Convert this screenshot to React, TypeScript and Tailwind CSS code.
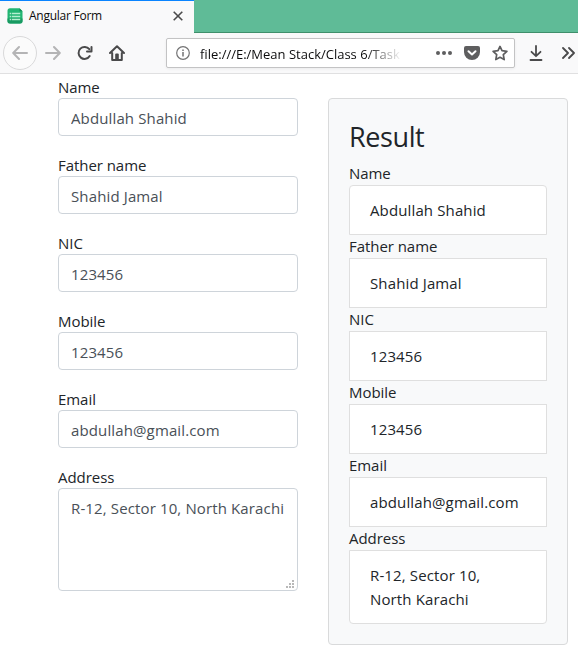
const uiFont = 'font-["Open_Sans","Noto_Sans",sans-serif]';

const fields = [
  { label: 'Name', value: 'Abdullah Shahid' },
  { label: 'Father name', value: 'Shahid Jamal' },
  { label: 'NIC', value: '123456' },
  { label: 'Mobile', value: '123456' },
  { label: 'Email', value: 'abdullah@gmail.com' },
];
const address = 'R-12, Sector 10, North Karachi';

function TabBar() {
  return (
    <div className="flex h-[33px] border-b border-[#3f8f6b] bg-[#5fbb97]">
      <div className="flex h-[33px] w-[194px] shrink-0 items-center border-t border-[#0a84ff] bg-[#f9f9fa] pb-1 pl-[7px] pr-[11px]">
        <svg width="16" height="16" viewBox="0 0 16 16" className="mt-px shrink-0">
          <path d="M3 0.3h9.5L15.5 3.3V13a2.5 2.5 0 0 1-2.5 2.5H3A2.5 2.5 0 0 1 .5 13V2.8A2.5 2.5 0 0 1 3 .3z" fill="#22b573" />
          <path d="M.5 10.5h15V13a2.5 2.5 0 0 1-2.5 2.5H3A2.5 2.5 0 0 1 .5 13z" fill="#189a62" />
          <path d="M12.5 .3l3 3h-3z" fill="#128a55" />
          <path d="M2.7 5.5h1.6M5 5.5h8.2M2.7 8.5h1.6M5 8.5h8.2M2.7 11.5h1.6M5 11.5h8.2" stroke="#b4efd0" strokeWidth="1.5" />
        </svg>
        <span className="ml-[6px] mt-0.5 whitespace-nowrap text-[12px] tracking-[-0.25px] text-[#0c0c0d]">Angular Form</span>
        <svg width="10" height="10" viewBox="0 0 10 10" className="ml-auto mt-0.5 shrink-0">
          <path d="M.7.7l8.6 8.6M9.3.7L.7 9.3" stroke="#4a4a4b" strokeWidth="1.6" />
        </svg>
      </div>
    </div>
  );
}

function NavBar() {
  return (
    <div className="flex h-[41px] items-center border-b border-[#e0e0e1] bg-[#f9f9fa] pl-[3px]">
      <div className="flex size-[34px] shrink-0 items-center justify-center rounded-full border border-[#d9d9da] bg-[#fbfbfb]">
        <svg width="16" height="16" viewBox="0 0 16 16" fill="none" stroke="#b4b4b5" strokeWidth="2" strokeLinecap="round" strokeLinejoin="round">
          <path d="M15 8H1.5M7 2L1.2 8L7 14" />
        </svg>
      </div>
      <svg width="16" height="16" viewBox="0 0 16 16" fill="none" stroke="#b4b4b5" strokeWidth="2" strokeLinecap="round" strokeLinejoin="round" className="ml-2 shrink-0">
        <path d="M1 8H14.5M9 2L14.8 8L9 14" />
      </svg>
      <svg width="16" height="16" viewBox="0 0 16 16" className="ml-4 shrink-0">
        <path d="M12.3 4.2A6 6 0 1 0 12.7 11" fill="none" stroke="#4a4a4b" strokeWidth="2" strokeLinecap="round" />
        <path d="M14.5 2v4.5H10" fill="none" stroke="#4a4a4b" strokeWidth="2" strokeLinecap="round" strokeLinejoin="round" />
      </svg>
      <svg width="16" height="16" viewBox="0 0 16 16" className="ml-4 shrink-0">
        <path d="M1 8L8 1.3L15 8M3.2 8v7h9.6V8" fill="none" stroke="#4a4a4b" strokeWidth="2" strokeLinecap="round" strokeLinejoin="round" />
        <path d="M6.2 15V9.5a1 1 0 0 1 1-1h1.6a1 1 0 0 1 1 1V15z" fill="#4a4a4b" />
      </svg>
      <div className="ml-[41px] flex h-[30px] w-[349px] shrink-0 items-center rounded-[2px] border border-[#c3c3c4] bg-white pl-[9px] pr-[6px] shadow-[0_1px_3px_rgba(0,0,0,0.06)]">
        <svg width="14" height="14" viewBox="0 0 14 14" className="shrink-0">
          <circle cx="7" cy="7" r="6.3" fill="none" stroke="#737374" strokeWidth="1.2" />
          <path d="M7 6v4.5M7 3.4v1.5" stroke="#737374" strokeWidth="1.5" />
        </svg>
        <div className="ml-[10px] mt-0.5 w-[202px] overflow-hidden whitespace-nowrap text-[13px] text-[#0c0c0d] [mask-image:linear-gradient(to_right,black_165px,transparent_202px)]">
          file:///E:/Mean Stack/Class 6/Task
        </div>
        <svg width="16" height="16" viewBox="0 0 16 16" fill="#5e5e5f" className="ml-auto shrink-0">
          <circle cx="2" cy="8" r="2" /><circle cx="8" cy="8" r="2" /><circle cx="14" cy="8" r="2" />
        </svg>
        <svg width="16" height="16" viewBox="0 0 16 16" className="ml-3 shrink-0">
          <path d="M2 1h12a2 2 0 0 1 2 2v4A8 8 0 0 1 0 7V3a2 2 0 0 1 2-2z" fill="#5e5e5f" />
          <path d="M4.5 6.2L8 9.5l3.5-3.3" fill="none" stroke="#fff" strokeWidth="2" strokeLinecap="round" strokeLinejoin="round" />
        </svg>
        <svg width="16" height="16" viewBox="0 0 16 16" className="ml-3 shrink-0">
          <path d="M8 1.4l2 4.3 4.9.6-3.6 3.4.9 4.9L8 12.3l-4.2 2.3.9-4.9L1.1 6.3 6 5.7z" fill="none" stroke="#5e5e5f" strokeWidth="1.7" strokeLinejoin="round" />
        </svg>
      </div>
      <svg width="14" height="16" viewBox="0 0 14 16" fill="none" stroke="#4a4a4b" strokeWidth="1.8" strokeLinecap="round" strokeLinejoin="round" className="ml-[14px] shrink-0">
        <path d="M7 1v10M2.5 6.8L7 11.2l4.5-4.4M1.5 15h11" />
      </svg>
      <svg width="14" height="14" viewBox="0 0 14 14" fill="none" stroke="#4a4a4b" strokeWidth="1.8" strokeLinecap="round" strokeLinejoin="round" className="ml-[18px] shrink-0">
        <path d="M2 2l5 5-5 5M8 2l5 5-5 5" />
      </svg>
    </div>
  );
}

export default function App() {
  return (
    <div className={`${uiFont} h-[650px] w-[578px] overflow-hidden bg-white text-[15px] leading-6 text-[#212529]`}>
      <TabBar />
      <NavBar />
      <main className="flex items-start pl-[58px]">
        <form className="w-[240px]">
          {fields.map((f) => (
            <div key={f.label} className="mb-4">
              <label className="block h-6 pt-px tracking-[-0.05px]">{f.label}</label>
              <input
                defaultValue={f.value}
                className="block h-[38px] w-full rounded border border-[#ced4da] bg-white px-3 pt-0.5 tracking-[0.13px] text-[#495057]"
              />
            </div>
          ))}
          <label className="block h-6 pt-px tracking-[-0.05px]">Address</label>
          <textarea
            defaultValue={address}
            className="block h-[103px] w-full resize-none overflow-hidden whitespace-nowrap rounded border border-[#ced4da] px-3 py-[7px] tracking-[0.13px] text-[#495057]"
          />
          <div className="relative">
            <svg width="8" height="8" viewBox="0 0 8 8" fill="#b8b8b8" className="absolute -top-[11px] right-[4px]">
              <path d="M6 0h2v2H6zM3 3h2v2H3zM6 3h2v2H6zM0 6h2v2H0zM3 6h2v2H3zM6 6h2v2H6z" />
            </svg>
          </div>
        </form>
        <section className="ml-[30px] mt-6 h-[547px] w-[240px] rounded border border-[#d9dadb] bg-[#f8f9fa] p-5">
          <h3 className="mb-2 h-[34px] pt-px text-[27px] leading-[34px] tracking-[-0.4px]">Result</h3>
          {fields.map((f, i) => (
            <div key={f.label} className="-mb-px">
              <div className="h-6 tracking-[-0.05px]">{f.label}</div>
              <div className={`h-[50px] border border-[#dfdfdf] bg-white px-5 py-3 tracking-[0.13px] ${i === 0 ? 'rounded-t' : ''}`}>{f.value}</div>
            </div>
          ))}
          <div className="h-6 tracking-[-0.05px]">Address</div>
          <div className="h-[74px] rounded-b border border-[#dfdfdf] bg-white py-3 pl-5 pr-10 tracking-[0.13px]">{address}</div>
        </section>
      </main>
    </div>
  );
}
